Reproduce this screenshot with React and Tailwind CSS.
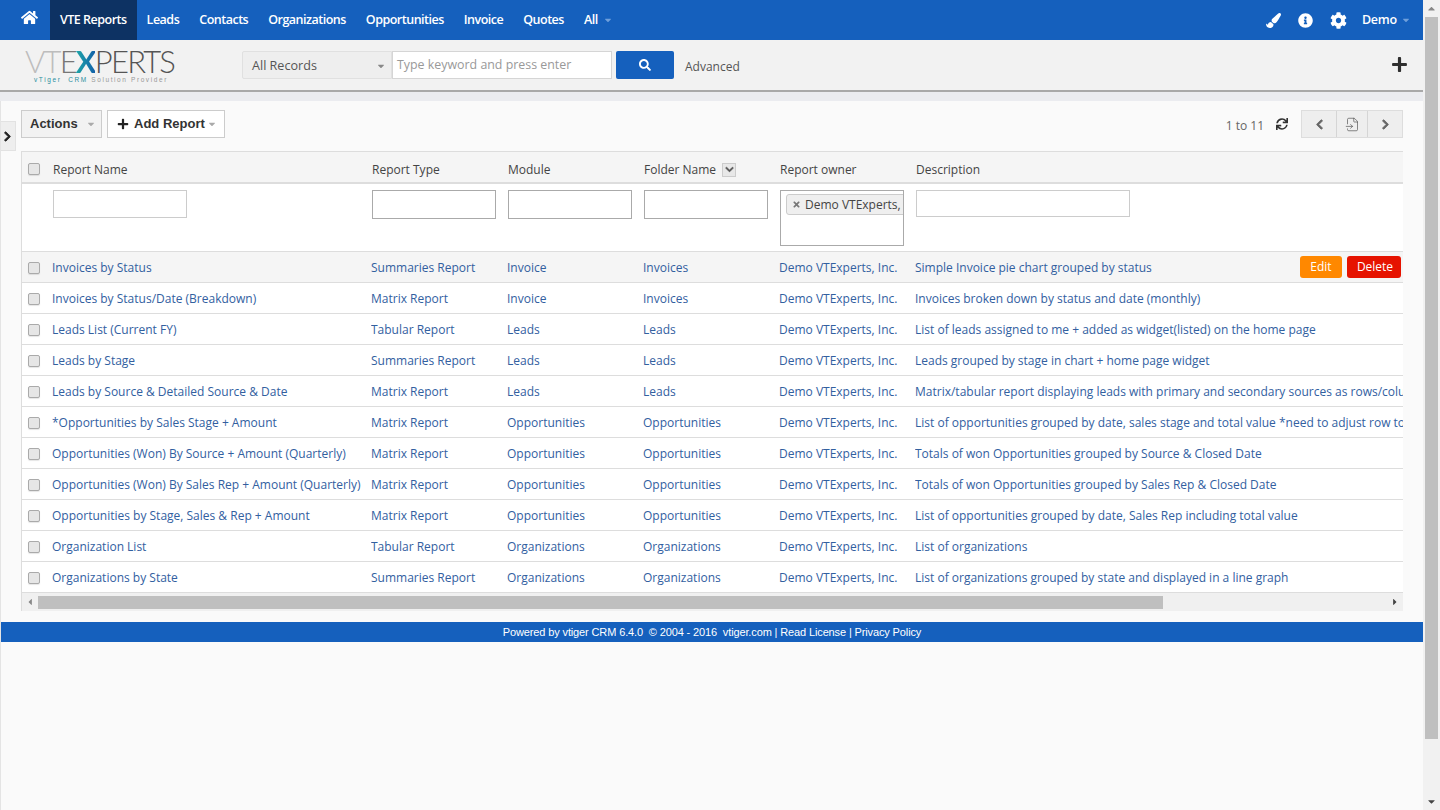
import React from "react";
import { FaHome, FaPaintBrush, FaInfoCircle, FaCog, FaPlus, FaSearch, FaChevronLeft, FaChevronRight, FaSync, FaCaretDown, FaCaretUp, FaCaretLeft, FaCaretRight, FaTimes, FaChevronDown } from "react-icons/fa";
import { FileInput } from "lucide-react";

const nav = ["Leads", "Contacts", "Organizations", "Opportunities", "Invoice", "Quotes"];
const rows = [
  ["Invoices by Status", "Summaries Report", "Invoice", "Invoices", "Simple Invoice pie chart grouped by status"],
  ["Invoices by Status/Date (Breakdown)", "Matrix Report", "Invoice", "Invoices", "Invoices broken down by status and date (monthly)"],
  ["Leads List (Current FY)", "Tabular Report", "Leads", "Leads", "List of leads assigned to me + added as widget(listed) on the home page"],
  ["Leads by Stage", "Summaries Report", "Leads", "Leads", "Leads grouped by stage in chart + home page widget"],
  ["Leads by Source & Detailed Source & Date", "Matrix Report", "Leads", "Leads", "Matrix/tabular report displaying leads with primary and secondary sources as rows/columns and date as the grouping"],
  ["*Opportunities by Sales Stage + Amount", "Matrix Report", "Opportunities", "Opportunities", "List of opportunities grouped by date, sales stage and total value *need to adjust row total calculation"],
  ["Opportunities (Won) By Source + Amount (Quarterly)", "Matrix Report", "Opportunities", "Opportunities", "Totals of won Opportunities grouped by Source & Closed Date"],
  ["Opportunities (Won) By Sales Rep + Amount (Quarterly)", "Matrix Report", "Opportunities", "Opportunities", "Totals of won Opportunities grouped by Sales Rep & Closed Date"],
  ["Opportunities by Stage, Sales & Rep + Amount", "Matrix Report", "Opportunities", "Opportunities", "List of opportunities grouped by date, Sales Rep including total value"],
  ["Organization List", "Tabular Report", "Organizations", "Organizations", "List of organizations"],
  ["Organizations by State", "Summaries Report", "Organizations", "Organizations", "List of organizations grouped by state and displayed in a line graph"],
];

function Check() {
  return <span className="block w-[12px] h-[12px] rounded-[2px] border border-[#aaa] bg-[#e6e6e6] shadow-[0_1px_1px_rgba(0,0,0,0.1)]" />;
}

function Cell({ w, children }) {
  return <div className={`${w} shrink-0 whitespace-nowrap overflow-hidden`}>{children}</div>;
}

function Row({ r, hot }) {
  return (
    <div className={`relative flex items-center h-[31px] pt-[1px] border-b border-[#ddd] text-[12px] text-[#32609f] ${hot ? "bg-[#f5f5f5]" : "bg-white"}`}>
      <div className="w-[30px] shrink-0 pl-[6px]"><Check /></div>
      <Cell w="w-[319px]">{r[0]}</Cell>
      <Cell w="w-[136px]">{r[1]}</Cell>
      <Cell w="w-[136px]">{r[2]}</Cell>
      <Cell w="w-[136px]">{r[3]}</Cell>
      <Cell w="w-[136px]">Demo VTExperts, Inc.</Cell>
      <div className="flex-1 whitespace-nowrap overflow-hidden">{r[4]}</div>
      {hot && (
        <div className="absolute left-[1278px] top-[4px] flex gap-[5px] text-white">
          <span className="w-[42px] h-[22px] rounded-[3px] bg-[#ff8800] flex items-center justify-center">Edit</span>
          <span className="w-[54px] h-[22px] rounded-[3px] bg-[#e61300] flex items-center justify-center pl-[2px]">Delete</span>
        </div>
      )}
    </div>
  );
}

export default function App() {
  return (
    <div className="flex h-[810px] w-[1440px] overflow-hidden bg-[#fafafa] font-['Open_Sans',sans-serif]">
      <div className="w-[1423px] shrink-0 border-l border-[#e4e4e4] flex flex-col">
        {/* top nav */}
        <div className="h-[40px] -ml-px bg-[#1560bd] flex items-center text-white text-[12.5px] font-semibold tracking-[-0.5px]">
          <div className="w-[50px] pl-[21px]"><FaHome className="text-[17px] -mt-[5px]" /></div>
          <div className="h-full flex items-center px-[10px] bg-[#0d3263]">VTE Reports</div>
          {nav.map((n) => (
            <div key={n} className="h-full flex items-center px-[10px]">{n}</div>
          ))}
          <div className="h-full flex items-center pl-[10px] gap-[5px]">All <FaCaretDown className="text-[10px] text-[#6f9fdb]" /></div>
          <div className="ml-auto flex items-center h-full">
            <FaPaintBrush className="text-[15px] mr-[17px]" />
            <FaInfoCircle className="text-[15px] mr-[17px]" />
            <FaCog className="text-[17px] mr-[15px]" />
            <span className="mr-[4px] text-[12.5px] tracking-[-0.2px]">Demo</span>
            <FaCaretDown className="text-[10px] text-[#6f9fdb] mr-[12px]" />
          </div>
        </div>
        {/* search bar */}
        <div className="h-[52px] -ml-px bg-[#f2f2f2] border-b-2 border-[#a9a9a9] flex items-start relative shrink-0">
          <div className="w-[242px] shrink-0 pl-[25px] pt-[7px]">
            <div className="leading-[28px] text-[31px] font-['Lato',sans-serif] font-light tracking-[-1.8px] whitespace-nowrap">
              <span className="text-[#bdbdbd]">VT</span><span className="text-[#777]">E</span><span className="font-bold bg-gradient-to-r from-[#22a6a6] to-[#1560a8] bg-clip-text text-transparent">X</span><span className="text-[#555]">PERTS</span>
            </div>
            <div className="text-[6.5px] leading-[7px] mt-[1px] ml-[9px] tracking-[1.6px] text-[#999] whitespace-nowrap font-['Liberation_Sans',sans-serif]">
              <span className="text-[#2a8fa0]">vTiger&nbsp; CRM</span> Solution Provider
            </div>
          </div>
          <div className="mt-[11px] w-[150px] h-[28px] bg-[#eeeeee] border border-[#e0e0e0] rounded-l-[2px] flex items-center justify-between pl-[9px] pr-[5px] text-[12.6px] text-[#555] pt-[2px]">
            All Records <FaCaretDown className="text-[10px] text-[#888]" />
          </div>
          <div className="mt-[11px] w-[220px] h-[28px] bg-white border border-[#d5d5d5] flex items-center pl-[4px] text-[12.4px] text-[#999]">Type keyword and press enter</div>
          <div className="mt-[11px] ml-[4px] w-[58px] h-[28px] bg-[#1560bd] rounded-[2px] flex items-center justify-center text-white"><FaSearch className="text-[12px]" /></div>
          <div className="mt-[18px] ml-[11px] text-[12px] text-[#555]">Advanced</div>
          <FaPlus className="absolute left-[1391px] top-[16px] text-[17px] text-[#2f2f2f]" />
        </div>
        <div className="h-[9px] -ml-px bg-[#ebecf0] shrink-0" />
        {/* main */}
        <div className="relative pl-[20px] pr-[20px] pt-[9px] bg-[#fafafa]">
          <div className="absolute left-0 top-[20px] w-[15px] h-[30px] bg-[#eeeeee] border border-l-0 border-[#e2e2e2] flex items-center pl-[1px]"><FaChevronRight className="text-[11px] text-[#222]" stroke="currentColor" strokeWidth={40} /></div>
          {/* toolbar */}
          <div className="flex items-center h-[28px] font-['Liberation_Sans',sans-serif] text-[13px] font-bold text-[#333]">
            <div className="h-full w-[81px] bg-[#f2f2f2] border border-[#ccc] flex items-center pl-[8px] gap-[8px]">Actions <FaCaretDown className="text-[10px] text-[#aaa]" /></div>
            <div className="h-full w-[118px] ml-[5px] bg-white border border-[#ccc] flex items-center pl-[9px] gap-[5px]"><FaPlus className="text-[12px] text-[#222]" />Add Report<FaCaretDown className="text-[10px] text-[#aaa] -ml-[3px]" /></div>
            <div className="ml-auto flex items-center h-full">
              <span className="font-['Open_Sans',sans-serif] font-normal text-[12px] text-[#666] mt-[3px]">1 to 11</span>
              <FaSync className="text-[12px] text-[#333] ml-[12px] mr-[13px]" />
              <div className="flex h-full w-[102px] bg-[#eeeeee] border border-[#ddd]">
                <div className="w-[35px] border-r border-[#d5d5d5] flex items-center justify-center"><FaChevronLeft className="text-[11px] text-[#666]" stroke="currentColor" strokeWidth={40} /></div>
                <div className="w-[31px] border-r border-[#d5d5d5] flex items-center justify-center"><FileInput size={15} strokeWidth={1} className="text-[#444]" /></div>
                <div className="flex-1 flex items-center justify-center"><FaChevronRight className="text-[11px] text-[#666]" stroke="currentColor" strokeWidth={40} /></div>
              </div>
            </div>
          </div>
          {/* table */}
          <div className="mt-[13px] border-l border-[#ddd] overflow-hidden">
            <div className="flex items-center h-[33px] pt-[5px] bg-[#f5f5f5] border-t border-[#ddd] border-b-2 border-b-[#dddddd] text-[12px] text-[#444]">
              <div className="w-[30px] shrink-0 pl-[6px] -mt-[2px]"><Check /></div>
              <Cell w="w-[320px] pl-[1px]">Report Name</Cell>
              <Cell w="w-[136px]">Report Type</Cell>
              <Cell w="w-[136px]">Module</Cell>
              <div className="w-[136px] shrink-0 flex items-center gap-[6px]">Folder Name <span className="w-[14px] h-[14px] border border-[#ccc] bg-[#e8e8e8] flex items-center justify-center"><FaChevronDown className="text-[9px] text-[#555]" stroke="currentColor" strokeWidth={30} /></span></div>
              <Cell w="w-[136px]">Report owner</Cell>
              <div className="flex-1">Description</div>
            </div>
            <div className="flex h-[68px] pt-[6px] bg-white border-b border-[#ddd] pl-[31px]">
              <div className="w-[319px] shrink-0"><div className="w-[134px] h-[28px] border border-[#ccc]" /></div>
              <div className="w-[136px] shrink-0"><div className="w-[124px] h-[29px] border border-[#aaa]" /></div>
              <div className="w-[136px] shrink-0"><div className="w-[124px] h-[29px] border border-[#aaa]" /></div>
              <div className="w-[136px] shrink-0"><div className="w-[124px] h-[29px] border border-[#aaa]" /></div>
              <div className="w-[136px] shrink-0">
                <div className="w-[124px] h-[56px] border border-[#aaa] pl-[5px] pt-[3px] overflow-hidden">
                  <div className="flex items-center h-[21px] w-[130px] bg-[#efefef] border border-[#ccc] rounded-[3px] pl-[5px] gap-[4px] text-[12px] text-[#444] whitespace-nowrap"><FaTimes className="text-[9px] text-[#777] shrink-0" />Demo VTExperts, Inc.</div>
                </div>
              </div>
              <div><div className="w-[214px] h-[27px] border border-[#ccc]" /></div>
            </div>
            {rows.map((r, i) => <Row key={r[0]} r={r} hot={i === 0} />)}
            <div className="flex items-center h-[18px] bg-[#f0f0f0] text-[#555]">
              <div className="w-[16px] flex justify-center"><FaCaretLeft className="text-[10px] text-[#888]" /></div>
              <div className="w-[1125px] h-[13px] bg-[#bfbfbf]" />
              <div className="ml-auto w-[17px] flex justify-center"><FaCaretRight className="text-[10px] text-[#444]" /></div>
            </div>
          </div>
        </div>
        {/* footer */}
        <div className="mt-[11px] h-[20px] pt-[1px] bg-[#1560bd] flex items-center justify-center text-white text-[11px] font-['Liberation_Sans',sans-serif] tracking-[-0.13px] whitespace-pre">
          Powered by vtiger CRM 6.4.0  © 2004 - 2016  vtiger.com | Read License | Privacy Policy
        </div>
      </div>
      {/* page scrollbar */}
      <div className="w-[17px] h-full bg-[#f1f1f1] flex flex-col items-center">
        <div className="h-[17px] flex items-center justify-center"><FaCaretUp className="text-[11px] text-[#888]" /></div>
        <div className="w-[13px] h-[722px] bg-[#bfbfbf]" />
        <div className="mt-auto h-[17px] flex items-center justify-center"><FaCaretDown className="text-[11px] text-[#444]" /></div>
      </div>
    </div>
  );
}
